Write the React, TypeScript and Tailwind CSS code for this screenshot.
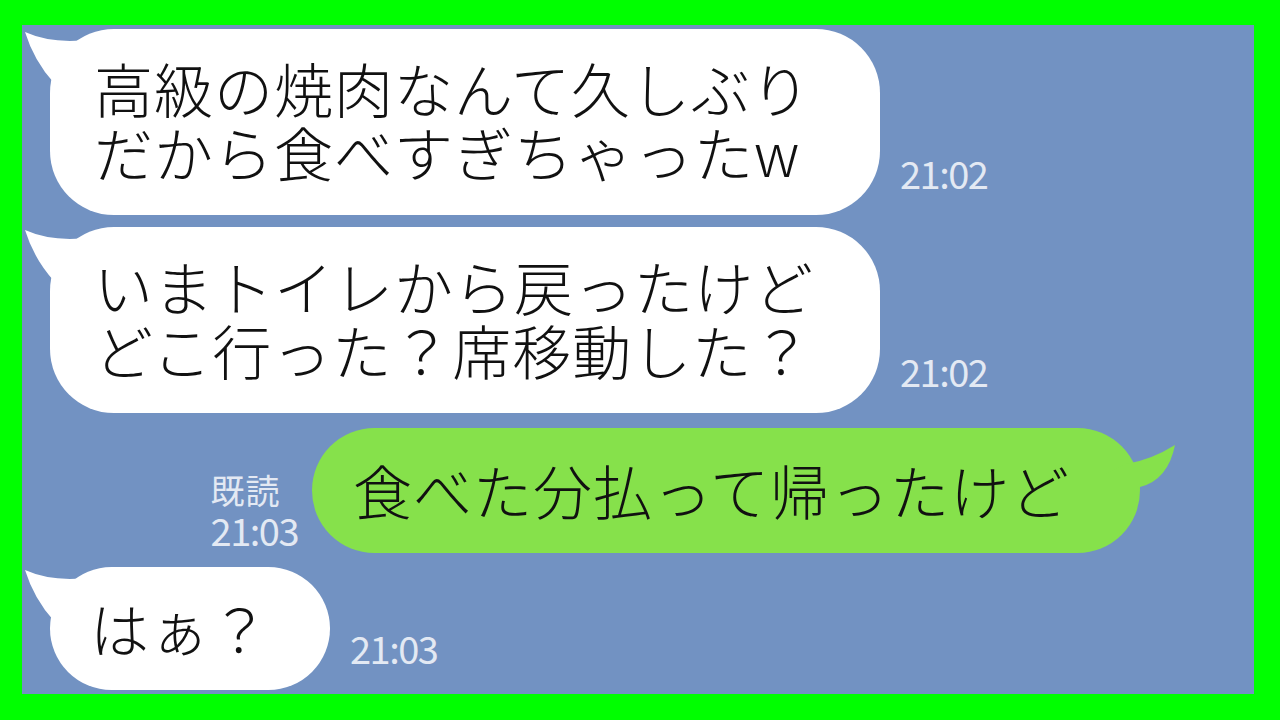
const jp = '"Noto Sans CJK JP", "Noto Sans", sans-serif';

type Msg = { lines: string[]; time: string; pad: string; box: string };

const LeftTail = () => (
  <svg className="absolute left-[-26px] top-[2px]" width="70" height="60" viewBox="0 0 70 60">
    <path d="M1,1 Q30,14 70,8 L70,60 L30,52 Q10,30 1,1 Z" fill="#ffffff" />
  </svg>
);

const RightTail = () => (
  <svg className="absolute right-[-36px] top-[16px]" width="70" height="60" viewBox="0 0 70 60">
    <path d="M69,1 Q45,16 20,20 L0,30 L0,60 L30,60 L34,43 Q62,36 69,1 Z" fill="#86e14b" />
  </svg>
);

const Stamp = ({ children }: { children: string }) => (
  <div className="text-[38px] leading-[38px] tracking-[-1.5px] text-[#e3e9f3]" style={{ fontFamily: jp }}>
    {children}
  </div>
);

const Incoming = ({ msg }: { msg: Msg }) => (
  <div className="flex items-end gap-[20px]">
    <div className={`relative bg-white rounded-[64px] ${msg.pad} ${msg.box}`}>
      <LeftTail />
      <div className="relative text-[59px] leading-[64px] tracking-[1px] font-light text-[#111]" style={{ fontFamily: jp }}>
        {msg.lines.map((l, i) => (
          <div key={i}>{l}</div>
        ))}
      </div>
    </div>
    <div className="mb-[23px]">
      <Stamp>{msg.time}</Stamp>
    </div>
  </div>
);

export default function App() {
  return (
    <div className="w-[1280px] h-[720px] bg-[#00ff00] pt-[25px] pl-[22px] pr-[26px] pb-[26px]">
      <div className="h-full bg-[#7292c2] pl-[28px] pt-[4px] flex flex-col overflow-hidden">
        <Incoming
          msg={{
            lines: ['高級の焼肉なんて久しぶり', 'だから食べすぎちゃったw'],
            time: '21:02',
            pad: 'pl-[44px] pt-[27px] pb-[31px]',
            box: 'w-[830px]',
          }}
        />
        <div className="mt-[12px]">
          <Incoming
            msg={{
              lines: ['いまトイレから戻ったけど', 'どこ行った？席移動した？'],
              time: '21:02',
              pad: 'pl-[44px] pt-[27px] pb-[31px]',
              box: 'w-[830px]',
            }}
          />
        </div>

        <div className="mt-[15px] flex items-end justify-end gap-[14px] pr-[114px]">
          <div className="mb-[3px] flex flex-col text-[#e3e9f3]" style={{ fontFamily: jp }}>
            <div className="text-[34px] leading-[40px] tracking-[1px]">既読</div>
            <div className="text-[38px] leading-[40px] tracking-[-1.5px]">21:03</div>
          </div>
          <div className="relative w-[828px] bg-[#86e14b] rounded-[63px] pl-[41px] pt-[30px] pb-[31px]">
            <RightTail />
            <div className="relative text-[59px] leading-[64px] tracking-[1px] font-light text-[#111]" style={{ fontFamily: jp }}>
              食べた分払って帰ったけど
            </div>
          </div>
        </div>

        <div className="mt-[14px]">
          <Incoming
            msg={{
              lines: ['はぁ？'],
              time: '21:03',
              pad: 'pl-[40px] pt-[29px] pb-[30px]',
              box: 'w-[280px]',
            }}
          />
        </div>
      </div>
    </div>
  );
}
